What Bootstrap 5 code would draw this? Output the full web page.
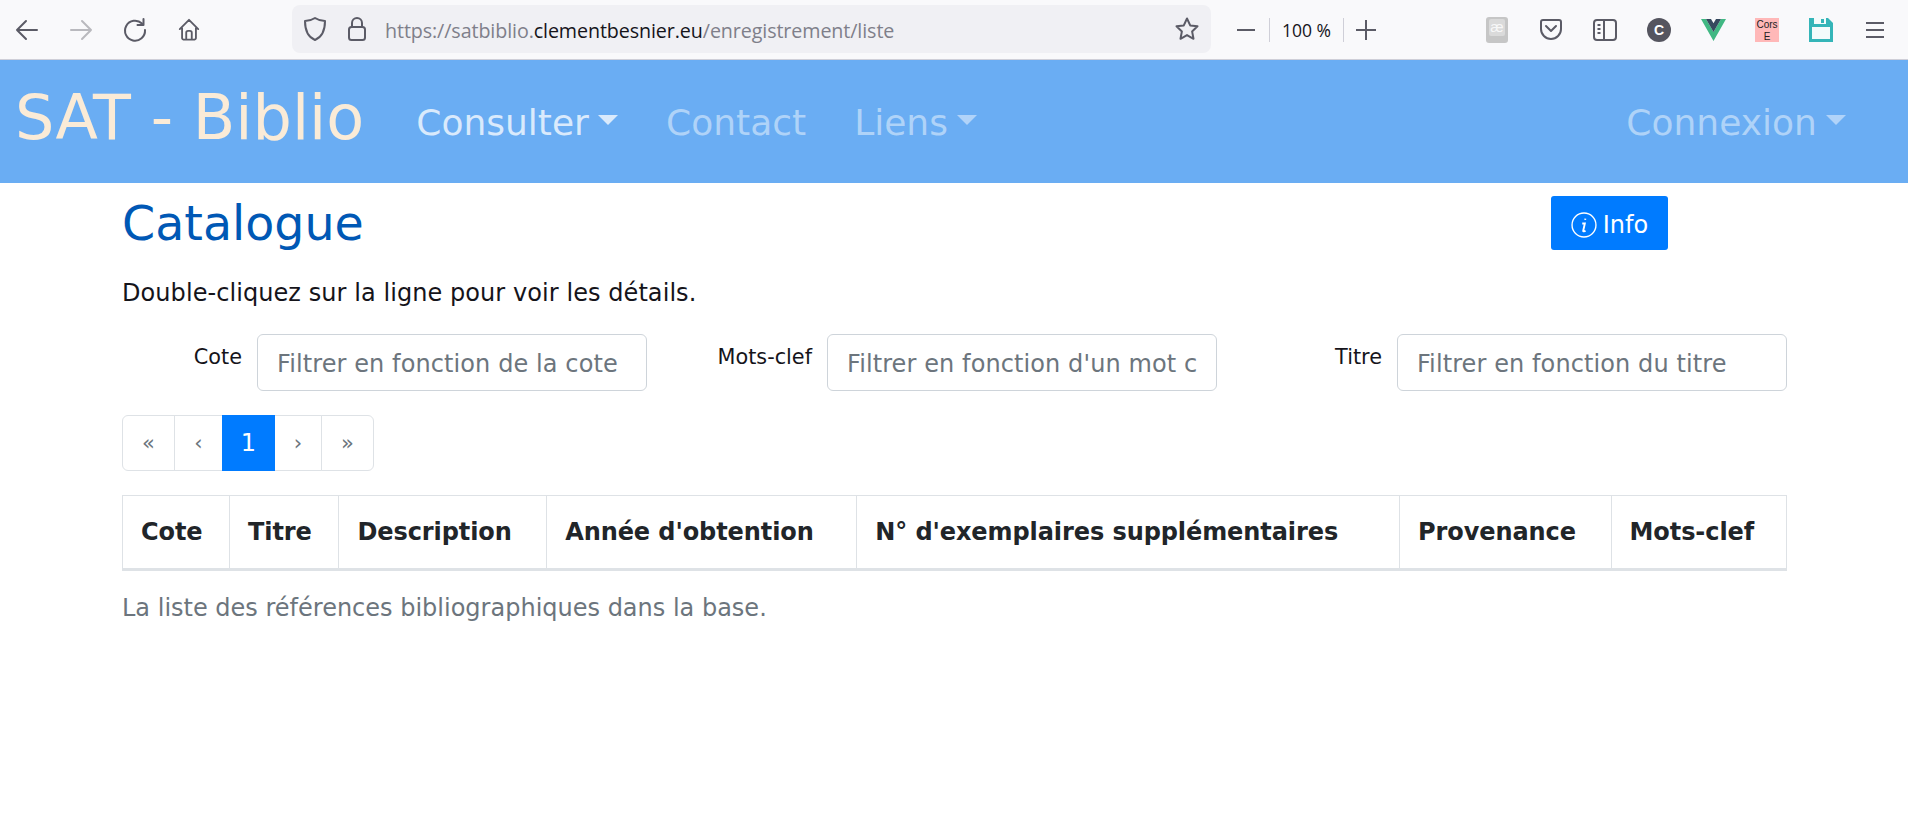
<!DOCTYPE html>
<html lang="fr">
<head>
<meta charset="utf-8">
<title>SAT - Biblio</title>
<link rel="stylesheet" href="https://cdn.jsdelivr.net/npm/bootstrap@5.3.0/dist/css/bootstrap.min.css">
<style>
html,body{height:100%;}
body{font-family:"DejaVu Sans",sans-serif;font-size:24px;color:#212529;background:#fff;overflow:hidden;}
.ffbar{height:60px;background:#f9f9fb;border-bottom:1px solid #cfcfd8;font-family:"Open Sans","Noto Sans",sans-serif;padding-right:6px;}
.ffbtn{width:54px;height:60px;flex:none;display:flex;align-items:center;justify-content:center;color:#5b5b66;}
.ffbtn svg{display:block;}
.urlbar{width:919px;height:48px;background:#f0f0f4;border-radius:8px;margin:5px 0 0 76px;flex:none;padding-left:2px;}
.urlicon{width:42px;flex:none;display:flex;justify-content:center;color:#5b5b66;}
.urltext{font-size:19.7px;color:#7f7f8a;margin:3px 0 0 7px;letter-spacing:-.1px;white-space:nowrap;}
.urltext b{font-weight:400;color:#15141a;}
.starbtn{width:48px;height:auto;margin-left:auto;}
.zoomtxt{font-size:17.5px;color:#15141a;padding:0 12px;border-left:1px solid #cfcfd8;border-right:1px solid #cfcfd8;line-height:24px;margin:0 8px 0 -4px;}
.satnav{background:#6aadf3;height:123px;padding:0 38px 0 15px;align-items:center;--bs-navbar-nav-link-padding-x:24px;}
.satnav .navbar-brand{font-size:62px;color:#faebd7;padding:0 0 6px;margin-right:28px;line-height:1.2;}
.satnav .navbar-nav .nav-link{font-size:36px;padding-top:2px;padding-bottom:0;line-height:1.5;color:rgba(255,255,255,.47);}
.satnav .navbar-nav .nav-link.on{color:rgba(255,255,255,.75);}
.pagewrap{padding:0 15px 0 30px;width:1710px;margin-left:92px;}
.headrow{height:92px;}
.cattitle{font-size:47.5px;color:#0058b5;margin:5px 0 0;line-height:1.5;}
.infobtn{background:#007bff;color:#fff;border:0;border-radius:3px;font-size:24px;width:117px;height:54px;margin:13px 119px 0 0;padding:3px 0 0;display:flex;align-items:center;justify-content:center;gap:6px;}
.hint{font-size:24px;margin:0;color:#15141a;letter-spacing:.07px;}
.filtrow{margin:23px -15px 0 -30px;}
.filtrow>div{padding:0 15px;display:flex;justify-content:flex-end;align-items:flex-start;gap:15px;}
.filtrow label{font-size:20.8px;color:#15141a;margin-top:8px;}
.filtrow input{width:390px;flex:none;height:57px;font-size:24px;padding:2px 19px 0;border-color:#ced4da;color:#495057;border-radius:6px;letter-spacing:.1px;}
.filtrow input::placeholder{color:#6c757d;}
.pgbar{margin:24px 0 0;}
.pgbar .page-link{font-size:24px;line-height:36px;height:56px;padding:9px 0;text-align:center;color:#6c757d;border-color:#dee2e6;}
.pgbar .page-link.chev{font-size:21px;}
.pgbar .page-item.active .page-link{background:#007bff;border-color:#007bff;color:#fff;}
.pgbar .page-item:nth-child(1) .page-link,.pgbar .page-item:nth-child(5) .page-link{width:53px;}
.pgbar .page-item:nth-child(2) .page-link{width:49px;}
.pgbar .page-item:nth-child(3) .page-link{width:53px;}
.pgbar .page-item:nth-child(4) .page-link{width:48px;}
.biblio{margin:24px 0 0;font-size:24px;caption-side:bottom;}
.biblio caption{padding:19px 0;color:#6c757d;font-size:24px;}
.biblio th{padding:18px;height:73px;vertical-align:middle;border-color:#dee2e6;color:#212529;font-weight:700;line-height:36px;white-space:nowrap;letter-spacing:-.08px;}
.biblio thead{border-bottom:3px solid #dee2e6;}
</style>
</head>
<body>
<div class="ffbar d-flex align-items-start">
  <div class="ffbtn"><svg width="26" height="26" viewBox="0 0 26 26" fill="none" stroke="currentColor" stroke-width="2" stroke-linecap="round" stroke-linejoin="round"><path d="M3 13h20M12 4l-9 9 9 9"/></svg></div>
  <div class="ffbtn"><svg width="26" height="26" viewBox="0 0 26 26" fill="none" stroke="#b9b9be" stroke-width="2" stroke-linecap="round" stroke-linejoin="round"><path d="M3 13h20M14 4l9 9-9 9"/></svg></div>
  <div class="ffbtn"><svg width="26" height="26" viewBox="0 0 26 26" fill="none" stroke="currentColor" stroke-width="2" stroke-linecap="round" stroke-linejoin="round"><path d="M20 6.500A10 10 0 1 0 23 13"/><path d="M21.500 2v6h-6"/></svg></div>
  <div class="ffbtn"><svg width="24" height="24" viewBox="0 0 24 26" fill="none" stroke="currentColor" stroke-width="2" stroke-linecap="round" stroke-linejoin="round"><path d="M2 12L12 2l10 10M4.500 10.500V22a2 2 0 0 0 1.500 1.500h12a2 2 0 0 0 1.500-1.500V10.500M9 23.500V16a2 2 0 0 1 2-2h2a2 2 0 0 1 2 2v7.500"/></svg></div>
  <div class="urlbar d-flex align-items-center">
    <span class="urlicon"><svg width="24" height="26" viewBox="0 0 24 26" fill="none" stroke="currentColor" stroke-width="2" stroke-linejoin="round"><path d="M12 2c3 2 6 3 10 3 0 9-3 16-10 19C5 21 2 14 2 5c4 0 7-1 10-3z"/></svg></span>
    <span class="urlicon"><svg width="20" height="26" viewBox="0 0 20 26" fill="none" stroke="currentColor" stroke-width="2" stroke-linejoin="round"><path d="M5 11V7a5 5 0 0 1 10 0v4"/><rect x="2" y="11" width="16" height="13" rx="2.500"/></svg></span>
    <span class="urltext">https://satbiblio.<b>clementbesnier.eu</b>/enregistrement/liste</span>
    <span class="ffbtn starbtn"><svg width="26" height="26" viewBox="0 0 26 26" fill="none" stroke="currentColor" stroke-width="2" stroke-linejoin="round"><path d="M13 2.500l3.200 6.900 7.300.9-5.400 5.100 1.400 7.400-6.500-3.700-6.500 3.700 1.400-7.400-5.400-5.100 7.300-.9z"/></svg></span>
  </div>
  <div class="d-flex align-items-center ms-2" style="height:60px">
    <div class="ffbtn"><svg width="20" height="20" viewBox="0 0 20 20" stroke="currentColor" stroke-width="2"><path d="M1 10h18"/></svg></div>
    <div class="zoomtxt">100 %</div>
    <div class="ffbtn" style="width:28px"><svg width="22" height="22" viewBox="0 0 22 22" stroke="currentColor" stroke-width="2"><path d="M1 11h20M11 1v20"/></svg></div>
  </div>
  <div class="d-flex ms-auto">
    <div class="ffbtn"><svg width="22" height="26" viewBox="0 0 22 26"><rect width="22" height="26" rx="3" fill="#c6c6c6"/><rect x="3" y="2" width="16" height="17" rx="2" fill="#dadada"/><text x="11" y="15" font-size="15" text-anchor="middle" fill="#f7f7f7" font-family="Liberation Sans">æ</text></svg></div>
    <div class="ffbtn"><svg width="22" height="24" viewBox="0 0 22 24" fill="none" stroke="currentColor" stroke-width="2" stroke-linecap="round" stroke-linejoin="round"><path d="M3 2h16a2 2 0 0 1 2 2v7a10 10 0 0 1-20 0V4a2 2 0 0 1 2-2z"/><path d="M6 8l5 5 5-5"/></svg></div>
    <div class="ffbtn"><svg width="24" height="22" viewBox="0 0 24 22" fill="none" stroke="currentColor" stroke-width="2"><rect x="1" y="1" width="22" height="20" rx="3"/><path d="M11 1v20M4.500 6h3M4.500 10h3M4.500 14h3"/></svg></div>
    <div class="ffbtn"><svg width="24" height="24" viewBox="0 0 24 24"><circle cx="12" cy="12" r="12" fill="#55555f"/><text x="12" y="17" font-size="14" font-weight="700" text-anchor="middle" fill="#fff" font-family="Liberation Sans">C</text></svg></div>
    <div class="ffbtn"><svg width="25" height="22" viewBox="0 0 25 22"><path d="M0 0h5l7.500 13L20 0h5L12.500 22z" fill="#41b883"/><path d="M5 0h5l2.500 4.300L15 0h5l-7.500 13z" fill="#35495e"/></svg></div>
    <div class="ffbtn"><svg width="24" height="24" viewBox="0 0 24 24"><rect width="24" height="24" fill="#ffb8b8"/><text x="12" y="10" font-size="10" text-anchor="middle" fill="#222" font-family="Liberation Sans">Cors</text><text x="12" y="22" font-size="10" text-anchor="middle" fill="#222" font-family="Liberation Sans">E</text></svg></div>
    <div class="ffbtn"><svg width="24" height="24" viewBox="0 0 24 24"><path d="M0 0h19l5 5v19H0z" fill="#35b5b8"/><rect x="3" y="9" width="18" height="12" fill="#f4fbfb"/><path d="M5 0h12v6H5z" fill="#f4fbfb"/><rect x="12" y="1" width="3" height="4" fill="#35b5b8"/></svg></div>
    <div class="ffbtn"><svg width="20" height="18" viewBox="0 0 20 18" stroke="currentColor" stroke-width="2"><path d="M1 2h18M1 9h18M1 16h18"/></svg></div>
  </div>
</div>

<nav class="navbar navbar-expand satnav">
  <a class="navbar-brand" href="#">SAT - Biblio</a>
  <ul class="navbar-nav me-auto">
    <li class="nav-item dropdown"><a class="nav-link on dropdown-toggle" href="#">Consulter</a></li>
    <li class="nav-item"><a class="nav-link" href="#">Contact</a></li>
    <li class="nav-item dropdown"><a class="nav-link dropdown-toggle" href="#">Liens</a></li>
  </ul>
  <ul class="navbar-nav">
    <li class="nav-item dropdown"><a class="nav-link dropdown-toggle" href="#">Connexion</a></li>
  </ul>
</nav>

<main class="pagewrap">
  <div class="headrow d-flex justify-content-between align-items-start">
    <h1 class="cattitle">Catalogue</h1>
    <button class="infobtn" type="button"><svg width="26" height="26" viewBox="0 0 25 25" fill="none" stroke="#fff" stroke-width="1.300"><circle cx="12.500" cy="12.500" r="11.500"/><path d="M13.800 6.300l-.2 1.200M10.800 11h2.500l-1.600 7.200c0 .6 1.200.5 2.300-.2" stroke-width="1.800"/></svg>Info</button>
  </div>
  <p class="hint">Double-cliquez sur la ligne pour voir les détails.</p>
  <div class="row filtrow">
    <div class="col-4"><label for="f1">Cote</label><input id="f1" class="form-control" placeholder="Filtrer en fonction de la cote"></div>
    <div class="col-4"><label for="f2">Mots-clef</label><input id="f2" class="form-control" placeholder="Filtrer en fonction d'un mot clef"></div>
    <div class="col-4"><label for="f3">Titre</label><input id="f3" class="form-control" placeholder="Filtrer en fonction du titre"></div>
  </div>
  <ul class="pagination pgbar">
    <li class="page-item"><a class="page-link chev" href="#">«</a></li>
    <li class="page-item"><a class="page-link chev" href="#">‹</a></li>
    <li class="page-item active"><a class="page-link" href="#">1</a></li>
    <li class="page-item"><a class="page-link chev" href="#">›</a></li>
    <li class="page-item"><a class="page-link chev" href="#">»</a></li>
  </ul>
  <table class="table table-bordered biblio">
    <caption>La liste des références bibliographiques dans la base.</caption>
    <thead><tr><th>Cote</th><th>Titre</th><th>Description</th><th>Année d'obtention</th><th>N° d'exemplaires supplémentaires</th><th>Provenance</th><th>Mots-clef</th></tr></thead>
  </table>
</main>
<script src="https://cdn.jsdelivr.net/npm/bootstrap@5.3.0/dist/js/bootstrap.bundle.min.js"></script>
</body>
</html>
